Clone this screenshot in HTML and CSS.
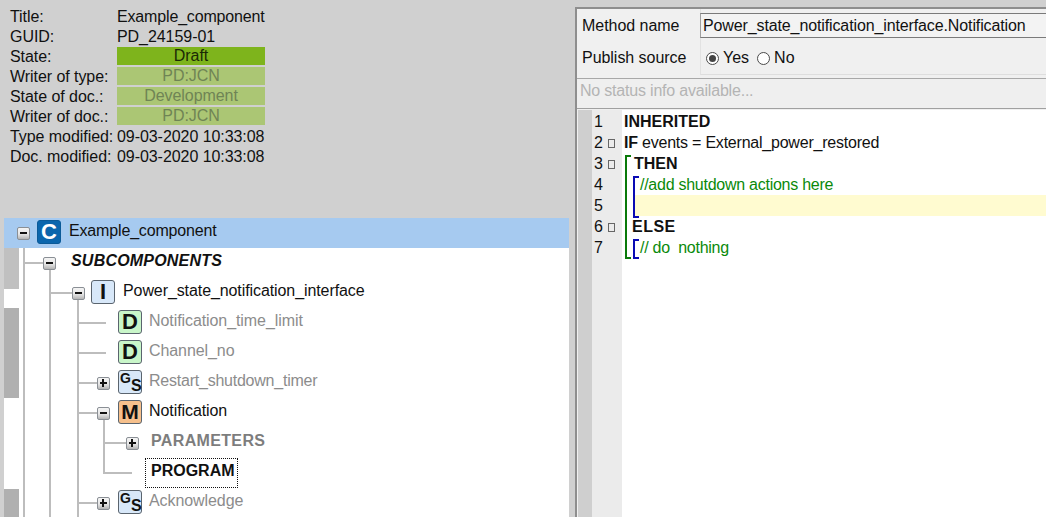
FILE: index.html
```html
<!DOCTYPE html>
<html lang="en">
<head>
<meta charset="utf-8">
<title>Example_component</title>
<link rel="stylesheet" href="styles.css">
</head>
<body>
<div class="app">
  <section class="left">
    <dl class="info">
      <dt>Title:</dt><dd class="tight">Example_component</dd>
      <dt>GUID:</dt><dd>PD_24159-01</dd>
      <dt>State:</dt><dd class="bar bar-on">Draft</dd>
      <dt>Writer of type:</dt><dd class="bar bar-off">PD:JCN</dd>
      <dt>State of doc.:</dt><dd class="bar bar-off">Development</dd>
      <dt>Writer of doc.:</dt><dd class="bar bar-off">PD:JCN</dd>
      <dt>Type modified:</dt><dd>09-03-2020 10:33:08</dd>
      <dt>Doc. modified:</dt><dd>09-03-2020 10:33:08</dd>
    </dl>
    <div class="tree">
      <svg class="lines" viewBox="4 218 565 299" width="565" height="299" aria-hidden="true">
        <path d="M24 248V517M24 263H43M50 269V517M50 293H72M78 299V517M78 323H106M78 353H106M78 383H97M78 413H97M78 503H97M104 420V473H132M104 443H126"/>
      </svg>
      <div class="row row-sel r0"><span class="exp minus"></span><span class="ico ico-c">C</span><span class="txt t-c tight">Example_component</span></div>
      <div class="row r1"><span class="exp minus"></span><span class="txt t-sub">SUBCOMPONENTS</span></div>
      <div class="row r2"><span class="exp minus"></span><span class="ico ico-i">I</span><span class="txt t-i">Power_state_notification_interface</span></div>
      <div class="row r3"><span class="ico ico-d">D</span><span class="txt t-d off">Notification_time_limit</span></div>
      <div class="row r3"><span class="ico ico-d">D</span><span class="txt t-d off">Channel_no</span></div>
      <div class="row r4"><span class="exp plus"></span><span class="ico ico-g"><b class="g">G</b><b class="s">S</b></span><span class="txt t-d off tighter">Restart_shutdown_timer</span></div>
      <div class="row r4"><span class="exp minus"></span><span class="ico ico-m">M</span><span class="txt t-d">Notification</span></div>
      <div class="row r5"><span class="exp plus"></span><span class="txt t-par">PARAMETERS</span></div>
      <div class="row r6"><span class="focus">PROGRAM</span></div>
      <div class="row r4"><span class="exp plus"></span><span class="ico ico-g"><b class="g">G</b><b class="s">S</b></span><span class="txt t-d off">Acknowledge</span></div>
    </div>
  </section>
  <section class="right">
    <div class="props">
      <div class="labels">
        <div class="lab">Method name</div>
        <div class="lab">Publish source</div>
      </div>
      <div class="fields">
        <div class="input">Power_state_notification_interface.Notification</div>
        <div class="radios">
          <span class="radio radio-on"></span><span class="rlabel">Yes</span>
          <span class="radio"></span><span class="rlabel">No</span>
        </div>
      </div>
    </div>
    <div class="status">No status info available...</div>
    <div class="code">
      <div class="strip"></div>
      <div class="gutter">
        <div class="ln">1</div>
        <div class="ln">2<i class="fold"></i></div>
        <div class="ln">3<i class="fold"></i></div>
        <div class="ln">4</div>
        <div class="ln">5</div>
        <div class="ln">6<i class="fold"></i></div>
        <div class="ln">7</div>
      </div>
      <div class="src">
        <span class="br br-g"></span>
        <span class="br br-b1"></span>
        <span class="br br-b2"></span>
        <div class="cl"><b>INHERITED</b></div>
        <div class="cl tighter"><b>IF</b> events = External_power_restored</div>
        <div class="cl in-then"><b>THEN</b></div>
        <div class="cl in-cm cm tightest">//add shutdown actions here</div>
        <div class="cl cl-yellow"></div>
        <div class="cl in-else"><b class="wide">ELSE</b></div>
        <div class="cl in-cm cm tightest">// do&nbsp; nothing</div>
      </div>
    </div>
  </section>
</div>
</body>
</html>
```
FILE: styles.css
```css
* { box-sizing: border-box; }
html, body { margin: 0; padding: 0; height: 517px; overflow: hidden; }
body { background: #d0d0d0; font: 16px/20px "Liberation Sans", Arial, sans-serif; color: #111; }
.app { display: flex; height: 517px; }
.tight { letter-spacing: -.16px; }
.tighter { letter-spacing: -.22px; }
.tightest { letter-spacing: -.26px; }

.left { width: 569px; flex: none; display: flex; flex-direction: column; }
.info { margin: 0; height: 218px; padding: 7px 0 0 10px; display: grid; grid-template-columns: 107px 148px; grid-auto-rows: 20px; align-content: start; letter-spacing: -.06px; }
.info dt, .info dd { margin: 0; white-space: nowrap; }
.bar { text-align: center; height: 18px; line-height: 18px; }
.bar-on { background: #7eb41c; color: #1a2a05; }
.bar-off { background: #abc674; color: #6f8455; }

.tree { position: relative; margin-left: 4px; flex: 1; overflow: hidden;
  background-color: #fff;
  background-image: linear-gradient(#c0c0c0 0 71px, #fff 71px 90px, #b0b0b0 90px 180px, #fff 180px 271px, #b0b0b0 271px);
  background-size: 15px 100%; background-repeat: no-repeat; }
.lines { position: absolute; left: 0; top: 0; }
.lines path { fill: none; stroke: #bdbdbd; stroke-width: 2; }
.row { position: relative; height: 30px; padding-top: 2px; display: flex; align-items: flex-start; white-space: nowrap; }
.row-sel { background: #a6caf0; }
.r0 { padding-left: 13px; }
.r1 { padding-left: 39px; }
.r2 { padding-left: 68px; }
.r3 { padding-left: 114px; }
.r4 { padding-left: 93px; }
.r5 { padding-left: 122px; }
.r6 { padding-left: 141px; padding-top: 0; }

.exp { width: 13px; height: 13px; margin-top: 7px; flex: none; position: relative; border: 1px solid #8a8f95; border-radius: 2px; background: linear-gradient(#f4f4f4, #e6e6e6 55%, #b4b4b4); }
.exp::before { content: ""; position: absolute; left: 2px; right: 2px; top: 4px; height: 2px; background: #111; }
.plus::after { content: ""; position: absolute; top: 1px; bottom: 2px; left: 4px; width: 2px; background: #111; }

.ico { width: 24px; height: 24px; flex: none; border: 1px solid #5a646e; border-radius: 3px; display: flex; align-items: center; justify-content: center; font: bold 22px/22px "Liberation Sans", Arial, sans-serif; color: #111; }
.ico-c { background: #0b66ad; border-color: #0b5a98; color: #fff; margin-left: 7px; }
.ico-i { background: #d8e8f9; margin-left: 6px; }
.ico-d { background: #c9f6c9; }
.ico-m { background: #f6c08c; margin-left: 8px; font-size: 21px; }
.ico-g { background: #d8e8f9; margin-left: 8px; display: block; position: relative; }
.ico-g .g { position: absolute; left: 1px; top: -1px; font-size: 14px; line-height: 16px; }
.ico-g .s { position: absolute; left: 12px; top: 7px; font-size: 16px; line-height: 16px; }

.txt { line-height: 20px; margin-top: 1px; }
.t-c { margin-left: 8px; }
.t-sub { margin-left: 15px; font-weight: bold; font-style: italic; letter-spacing: .2px; }
.t-i { margin-left: 8px; letter-spacing: -.09px; }
.t-d { margin-left: 7px; letter-spacing: -.08px; }
.t-d.tighter { letter-spacing: -.23px; }
.t-par { margin-left: 12px; font-weight: bold; color: #7d7d7d; letter-spacing: .35px; }
.off { color: #8c8c8c; }
.focus { width: 93px; height: 30px; padding-left: 5px; border: 1px dotted #111; font-weight: bold; line-height: 24px; background: #fff; }

.right { flex: 1; min-width: 0; margin: 7px 0 0 6px; padding-left: 1px; border-top: 2px solid #8e8e8e; border-left: 2px solid #8e8e8e; background: #f0f0f0; display: flex; flex-direction: column; overflow: hidden; }
.props { display: flex; height: 66px; }
.labels { width: 122px; flex: none; padding: 7px 0 0 4px; }
.lab { height: 32px; line-height: 20px; letter-spacing: -.04px; }
.fields { flex: 1; min-width: 0; border-left: 1px solid #e2e2e2; border-bottom: 1px solid #dedede; }
.input { margin-top: 4px; height: 25px; margin-left: -1px; padding: 1px 0 0 2px; line-height: 22px; border-top: 1px solid #7a7a7a; border-bottom: 1px solid #7a7a7a; border-left: 1px solid #a0a0a0; background: #f3f3f3; white-space: nowrap; letter-spacing: -.12px; }
.radios { display: flex; align-items: center; height: 28px; padding-left: 5px; margin-top: 6px; }
.radio { width: 13px; height: 13px; border: 1px solid #4a4a4a; border-radius: 50%; background: #fff; position: relative; flex: none; }
.radio-on::after { content: ""; position: absolute; left: 2px; top: 2px; width: 7px; height: 7px; border-radius: 50%; background: #444; }
.rlabel { margin-left: 4px; margin-right: 8px; }

.status { margin-top: 3px; height: 31px; border-top: 1px solid #a8a8a8; border-bottom: 1px solid #a0a0a0; padding-left: 3px; line-height: 24px; color: #b4b4b4; background: #efefef; letter-spacing: -.2px; margin-left: -1px; }
.code { flex: 1; display: flex; margin-top: 1px; background: #fff; }
.strip { width: 14px; flex: none; background: #cfcfcf; }
.gutter { width: 30px; flex: none; background: #ebebeb; padding-top: 1px; }
.ln { height: 21px; padding-left: 2px; position: relative; line-height: 21px; }
.fold { position: absolute; left: 16px; top: 7px; width: 7px; height: 9px; border: 1px solid #666; }
.src { flex: 1; min-width: 0; position: relative; padding-top: 1px; padding-left: 2px; }
.cl { height: 21px; line-height: 21px; white-space: nowrap; }
.cm { color: #0a8a0a; }
.in-then { padding-left: 10px; }
.in-else { padding-left: 8px; }
.in-cm { padding-left: 16px; }
.wide { letter-spacing: .5px; }
.cl-yellow { background: #fffbd0; margin-left: 11px; }
.br { position: absolute; border: solid; border-width: 2px 0 2px 2px; width: 6px; }
.br-g { border-color: #0a7a0a; left: 3px; top: 45px; height: 104px; }
.br-b1 { border-color: #0a0ab4; left: 11px; top: 66px; height: 42px; z-index: 1; }
.br-b2 { border-color: #0a0ab4; left: 11px; top: 129px; height: 20px; }
```
